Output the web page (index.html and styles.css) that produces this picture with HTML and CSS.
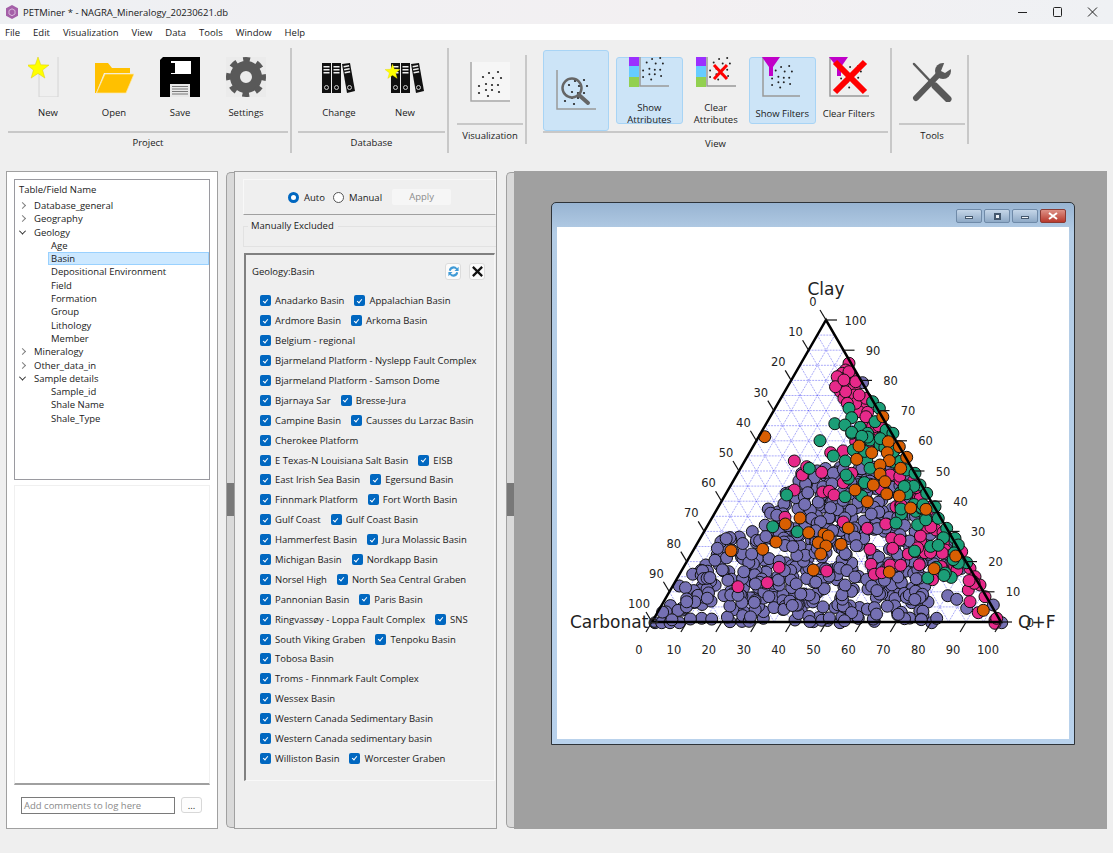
FILE: index.html
```html
<!DOCTYPE html>
<html>

<head>
    <meta charset="utf-8">
    <title>PETMiner * - NAGRA_Mineralogy_20230621.db</title>
    <link rel="stylesheet" href="styles.css">
</head>

<body>
    <svg class="defs" width="0" height="0">
        <defs>
            <symbol id="dots" viewBox="0 0 40 40">
                <g fill="#222">
                    <circle cx="28" cy="10" r="1.100" /><circle cx="19" cy="11" r="1.100" /><circle cx="13" cy="15" r="1.100" />
                    <circle cx="23" cy="16" r="1.100" /><circle cx="31" cy="16" r="1.100" /><circle cx="16" cy="22" r="1.100" />
                    <circle cx="22" cy="23" r="1.100" /><circle cx="28" cy="23" r="1.100" /><circle cx="9" cy="24" r="1.100" />
                    <circle cx="16" cy="28" r="1.100" /><circle cx="22" cy="28" r="1.100" /><circle cx="29" cy="30" r="1.100" />
                    <circle cx="9" cy="31" r="1.100" /><circle cx="18" cy="34" r="1.100" />
                </g>
            </symbol>
            <symbol id="binders" viewBox="0 0 33 30">
                <rect x="0" y="0" width="9" height="30" fill="#111" />
                <rect x="10" y="0" width="9" height="30" fill="#111" />
                <path d="M20 1 28 0 33 28 25 30Z" fill="#111" />
                <path d="M1.5 3h6v1.5h-6zM1.5 6h6v1.5h-6zM1.5 9h6v1.5h-6zM11.500 3h6v1.500h-6zM11.500 6h6v1.500h-6zM11.500 9h6v1.500h-6z" fill="#eee" />
                <path d="M21.500 3 27 2 27.300 3.500 21.800 4.500ZM22 6 27.500 5 27.800 6.500 22.300 7.500ZM22.500 9 28 8 28.300 9.500 22.800 10.500Z" fill="#eee" />
                <circle cx="4.500" cy="24.500" r="2" fill="none" stroke="#ccc" />
                <circle cx="14.500" cy="24.500" r="2" fill="none" stroke="#ccc" />
                <circle cx="27.500" cy="24.500" r="2" fill="none" stroke="#ccc" />
            </symbol>
            <symbol id="star" viewBox="0 0 24 24">
                <path d="M12 0 15 8.500 24 8.800 17 14.200 19.500 23 12 18 4.500 23 7 14.200 0 8.800 9 8.500Z" fill="#ffff00" stroke="#d8c800" stroke-width=".5" />
            </symbol>
        </defs>
    </svg>

    <div class="titlebar">
        <div class="title-left">
            <svg class="app-icon" viewBox="0 0 14 14" width="14" height="14">
                <path d="M7 0 13 3.300V10.700L7 14 1 10.700V3.300Z" fill="#a45fa8" />
                <path d="M4 5.500 7 3.800 10 5.500V9L7 10.700 4 9Z" fill="none" stroke="#d9b8dc" />
            </svg>
            <span>PETMiner * - NAGRA_Mineralogy_20230621.db</span>
        </div>
        <div class="win-controls">
            <svg class="win-btn" viewBox="0 0 35 24"><path d="M13 12.500h9" stroke="#222" /></svg>
            <svg class="win-btn" viewBox="0 0 35 24"><rect x="13.500" y="7.500" width="8" height="9" rx="1" fill="none" stroke="#222" /></svg>
            <svg class="win-btn" viewBox="0 0 35 24"><path d="M13 7.500l9 9M22 7.500l-9 9" stroke="#222" /></svg>
        </div>
    </div>

    <div class="menubar">
        <span>File</span><span>Edit</span><span>Visualization</span><span>View</span><span>Data</span><span>Tools</span><span>Window</span><span>Help</span>
    </div>

    <div class="toolbar">
        <div class="tool-group project">
            <div class="tool-items">
                <div class="tool">
                    <svg class="icon" viewBox="0 0 40 40">
                        <path d="M11 40H30V0" fill="none" stroke="#d4d4d4" />
                        <path d="M11 40V10" fill="none" stroke="#d4d4d4" />
                        <use href="#star" x="-1" y="0" width="22" height="22" />
                    </svg>
                    <span class="tool-label">New</span>
                </div>
                <div class="tool">
                    <svg class="icon" viewBox="0 0 40 40">
                        <path d="M1 36V6H14L18 11H36V16H10L2 36Z" fill="#ffc000" />
                        <path d="M11 17H40L32 36H2.500Z" fill="#ffc000" stroke="#ffe9a8" stroke-width=".7" />
                    </svg>
                    <span class="tool-label">Open</span>
                </div>
                <div class="tool">
                    <svg class="icon" viewBox="0 0 40 40">
                        <path d="M0 3 3 0H40V40H0Z" fill="#000" />
                        <rect x="11" y="4" width="20" height="13" fill="#fff" />
                        <rect x="11" y="6" width="4" height="10" fill="#000" />
                        <rect x="10" y="27" width="20" height="13" fill="#e8e8e8" />
                        <path d="M12 29.500h16M12 32h16M12 34.500h16M12 37h16" stroke="#777" />
                    </svg>
                    <span class="tool-label">Save</span>
                </div>
                <div class="tool">
                    <svg class="icon" viewBox="0 0 40 40">
                        <rect width="40" height="40" fill="#ebebeb" />
                        <circle cx="20" cy="20" r="11" fill="none" stroke="#595959" stroke-width="10" />
                        <circle cx="20" cy="20" r="17" fill="none" stroke="#595959" stroke-width="6" stroke-dasharray="6.700 6.650" stroke-dashoffset="3.300" />
                    </svg>
                    <span class="tool-label">Settings</span>
                </div>
            </div>
            <div class="tool-title">Project</div>
        </div>

        <div class="tool-group database">
            <div class="tool-items">
                <div class="tool">
                    <svg class="icon" viewBox="0 0 40 40"><use href="#binders" x="3" y="6" width="33" height="30" /></svg>
                    <span class="tool-label">Change</span>
                </div>
                <div class="tool">
                    <svg class="icon" viewBox="0 0 40 40">
                        <use href="#binders" x="6" y="6" width="33" height="30" />
                        <use href="#star" x="0" y="6" width="15" height="17" />
                    </svg>
                    <span class="tool-label">New</span>
                </div>
            </div>
            <div class="tool-title">Database</div>
        </div>

        <div class="tool-group short visualization">
            <div class="tool-items">
                <div class="tool">
                    <svg class="icon" viewBox="0 0 40 40">
                        <rect width="40" height="40" fill="#f6f6f6" />
                        <path d="M1 0V39H40" fill="none" stroke="#a6a6a6" stroke-width="1.500" />
                        <use href="#dots" width="40" height="40" />
                    </svg>
                </div>
            </div>
            <div class="tool-title">Visualization</div>
        </div>

        <div class="tool-group view">
            <div class="tool-items">
                <div class="tool tall active">
                    <svg class="icon" viewBox="0 0 40 40">
                        <path d="M1 0V39H40" fill="none" stroke="#999" stroke-width="1.500" />
                        <use href="#dots" width="40" height="40" />
                        <circle cx="16" cy="18" r="9.500" fill="none" stroke="#666" stroke-width="2.500" />
                        <path d="M23 25 32 33" stroke="#666" stroke-width="4" stroke-linecap="round" />
                    </svg>
                </div>
                <div class="tool small on">
                    <svg class="icon-flat" viewBox="0 0 40 30">
                        <rect width="10" height="9" fill="#9b30ff" />
                        <rect y="9" width="10" height="11" fill="#66ccff" />
                        <rect y="20" width="10" height="10" fill="#92d050" />
                        <path d="M11 0V29H40" fill="none" stroke="#999" stroke-width="1.500" />
                        <use href="#dots" x="6" y="-8" width="36" height="36" />
                    </svg>
                    <span class="tool-label two">Show<br>Attributes</span>
                </div>
                <div class="tool small">
                    <svg class="icon-flat" viewBox="0 0 40 30">
                        <rect width="10" height="9" fill="#9b30ff" />
                        <rect y="9" width="10" height="11" fill="#66ccff" />
                        <rect y="20" width="10" height="10" fill="#92d050" />
                        <path d="M11 0V29H40" fill="none" stroke="#999" stroke-width="1.500" />
                        <use href="#dots" x="6" y="-8" width="36" height="36" />
                        <path d="M18 8 31 22M31 8 18 22" stroke="#f00" stroke-width="3" />
                    </svg>
                    <span class="tool-label two">Clear<br>Attributes</span>
                </div>
                <div class="tool small on">
                    <svg class="icon" viewBox="0 0 40 40">
                        <path d="M1 0V39H38" fill="none" stroke="#999" stroke-width="1.500" />
                        <use href="#dots" x="2" width="36" height="36" />
                        <path d="M0 0H18L11 10V19H7V10Z" fill="#c000c8" />
                    </svg>
                    <span class="tool-label one">Show Filters</span>
                </div>
                <div class="tool small">
                    <svg class="icon" viewBox="0 0 40 40">
                        <path d="M1 0V39H40" fill="none" stroke="#999" stroke-width="1.500" />
                        <use href="#dots" x="4" width="36" height="36" />
                        <path d="M0 0H19L12 10V19H8V10Z" fill="#c000c8" />
                        <path d="M6 5 36 35M36 5 6 35" stroke="#f00" stroke-width="6" />
                    </svg>
                    <span class="tool-label one">Clear Filters</span>
                </div>
            </div>
            <div class="tool-title">View</div>
        </div>

        <div class="tool-group short tools">
            <div class="tool-items">
                <div class="tool">
                    <svg class="icon" viewBox="0 0 40 40">
                        <path d="M2 2 20 21" stroke="#595959" stroke-width="2.500" stroke-linecap="round" />
                        <path d="M23 24 36 37" stroke="#595959" stroke-width="7" stroke-linecap="round" />
                        <path d="M4 36 28 11" stroke="#595959" stroke-width="6" stroke-linecap="round" />
                        <circle cx="31" cy="9" r="8" fill="#595959" />
                        <path d="M29 9 33 -1 42 5 33 11Z" fill="#efefef" />
                    </svg>
                </div>
            </div>
            <div class="tool-title">Tools</div>
        </div>
    </div>

    <div class="main">
        <div class="panel left-panel">
            <div class="tree">
                <div class="tree-head">Table/Field Name</div>
                <div class="row parent"><span class="arrow closed"></span>Database_general</div>
                <div class="row parent"><span class="arrow closed"></span>Geography</div>
                <div class="row parent"><span class="arrow open"></span>Geology</div>
                <div class="row child">Age</div>
                <div class="row child selected">Basin</div>
                <div class="row child">Depositional Environment</div>
                <div class="row child">Field</div>
                <div class="row child">Formation</div>
                <div class="row child">Group</div>
                <div class="row child">Lithology</div>
                <div class="row child">Member</div>
                <div class="row parent"><span class="arrow closed"></span>Mineralogy</div>
                <div class="row parent"><span class="arrow closed"></span>Other_data_in</div>
                <div class="row parent"><span class="arrow open"></span>Sample details</div>
                <div class="row child">Sample_id</div>
                <div class="row child">Shale Name</div>
                <div class="row child">Shale_Type</div>
            </div>
            <div class="log"></div>
            <div class="comment-row">
                <div class="comment-input">Add comments to log here</div>
                <div class="comment-btn">...</div>
            </div>
        </div>

        <div class="splitter"><div class="handle"></div></div>

        <div class="panel mid-panel">
            <div class="mode-box">
                <span class="radio checked"></span><span class="mode-label">Auto</span>
                <span class="radio"></span><span class="mode-label">Manual</span>
                <span class="apply">Apply</span>
            </div>
            <div class="excluded"><span class="legend">Manually Excluded</span></div>
            <div class="filter-box">
                <div class="filter-head">
                    <span class="filter-name">Geology:Basin</span>
                    <span class="small-btn">
                        <svg viewBox="0 0 14 14" width="13" height="13">
                            <path d="M2 6A5 5 0 0 1 11 3.500L12.500 2V6.500H8L9.800 4.800A3.500 3.500 0 0 0 4 6.500Z" fill="#3f9ad6" />
                            <path d="M12 8A5 5 0 0 1 3 10.500L1.500 12V7.500H6L4.200 9.200A3.500 3.500 0 0 0 10 7.500Z" fill="#3f9ad6" />
                        </svg>
                    </span>
                    <span class="small-btn">
                        <svg viewBox="0 0 14 14" width="13" height="13"><path d="M2 2 12 12M12 2 2 12" stroke="#111" stroke-width="2.400" /></svg>
                    </span>
                </div>
                <div class="filter-row"><span class="check"></span>Anadarko Basin<span class="check"></span>Appalachian Basin</div>
                <div class="filter-row"><span class="check"></span>Ardmore Basin<span class="check"></span>Arkoma Basin</div>
                <div class="filter-row"><span class="check"></span>Belgium - regional</div>
                <div class="filter-row"><span class="check"></span>Bjarmeland Platform - Nyslepp Fault Complex</div>
                <div class="filter-row"><span class="check"></span>Bjarmeland Platform - Samson Dome</div>
                <div class="filter-row"><span class="check"></span>Bjarnaya Sar<span class="check"></span>Bresse-Jura</div>
                <div class="filter-row"><span class="check"></span>Campine Basin<span class="check"></span>Causses du Larzac Basin</div>
                <div class="filter-row"><span class="check"></span>Cherokee Platform</div>
                <div class="filter-row"><span class="check"></span>E Texas-N Louisiana Salt Basin<span class="check"></span>EISB</div>
                <div class="filter-row"><span class="check"></span>East Irish Sea Basin<span class="check"></span>Egersund Basin</div>
                <div class="filter-row"><span class="check"></span>Finnmark Platform<span class="check"></span>Fort Worth Basin</div>
                <div class="filter-row"><span class="check"></span>Gulf Coast<span class="check"></span>Gulf Coast Basin</div>
                <div class="filter-row"><span class="check"></span>Hammerfest Basin<span class="check"></span>Jura Molassic Basin</div>
                <div class="filter-row"><span class="check"></span>Michigan Basin<span class="check"></span>Nordkapp Basin</div>
                <div class="filter-row"><span class="check"></span>Norsel High<span class="check"></span>North Sea Central Graben</div>
                <div class="filter-row"><span class="check"></span>Pannonian Basin<span class="check"></span>Paris Basin</div>
                <div class="filter-row"><span class="check"></span>Ringvassøy - Loppa Fault Complex<span class="check"></span>SNS</div>
                <div class="filter-row"><span class="check"></span>South Viking Graben<span class="check"></span>Tenpoku Basin</div>
                <div class="filter-row"><span class="check"></span>Tobosa Basin</div>
                <div class="filter-row"><span class="check"></span>Troms - Finnmark Fault Complex</div>
                <div class="filter-row"><span class="check"></span>Wessex Basin</div>
                <div class="filter-row"><span class="check"></span>Western Canada Sedimentary Basin</div>
                <div class="filter-row"><span class="check"></span>Western Canada sedimentary basin</div>
                <div class="filter-row"><span class="check"></span>Williston Basin<span class="check"></span>Worcester Graben</div>
            </div>
        </div>

        <div class="splitter second"><div class="handle"></div></div>

        <div class="workspace">
            <div class="subwindow">
                <div class="sub-title">
                    <span class="sub-btn"><i class="bar"></i></span>
                    <span class="sub-btn"><i class="box"></i></span>
                    <span class="sub-btn"><i class="bar"></i></span>
                    <span class="sub-btn close">
                        <svg viewBox="0 0 10 8" width="10" height="8"><path d="M1 1 9 7M9 1 1 7" stroke="#fff" stroke-width="2" /></svg>
                    </span>
                </div>
                <div class="sub-body">
                    <svg id="chart" class="chart" viewBox="557 227 512 512"></svg>
                </div>
            </div>
        </div>
    </div>

    <script src="script.js"></script>
</body>

</html>
```

FILE: styles.css
```css
html {
    font-family: "Open Sans", "Noto Sans", sans-serif;
    font-size: 9.5px;
    color: #1a1a1a;
}

body {
    margin: 0;
    width: 1113px;
    height: 853px;
    overflow: hidden;
    background-color: #efefef;
}

.defs {
    position: absolute;
}

.titlebar {
    height: 24px;
    display: flex;
    justify-content: space-between;
    align-items: center;
    background: linear-gradient(90deg, #eef0f3, #f3f0f2 60%, #eff1f4);
}

.title-left {
    display: flex;
    align-items: center;
    gap: 4px;
    padding-left: 5px;
}

.win-controls {
    display: flex;
    padding-right: 3px;
}

.win-btn {
    width: 35px;
    height: 24px;
}

.menubar {
    height: 16px;
    display: flex;
    align-items: center;
    gap: 13px;
    padding-left: 5px;
    background-color: #fff;
}

.toolbar {
    height: 130px;
    padding-left: 8px;
    display: flex;
    align-items: flex-start;
}

.tool-group {
    margin-top: 8px;
    height: 105px;
    padding-right: 2px;
    border-right: 2px solid #c8c8c8;
    box-sizing: border-box;
}

.tool-group.short {
    margin-top: 15px;
    height: 89px;
}

.tool-items {
    height: 83px;
    display: flex;
    padding: 0 7px;
}

.short .tool-items {
    height: 68px;
}

.tool-title {
    border-top: 2px solid #c8c8c8;
    text-align: center;
    padding-top: 2px;
    line-height: 15px;
}

.short .tool-title {
    padding-top: 3px;
}

.view .tool-title {
    padding-top: 3px;
}

.project {
    width: 284px;
}

.database {
    width: 151px;
    margin-left: 6px;
}

.database .tool-items {
    padding: 0 8px;
}

.visualization {
    width: 70px;
    margin-left: 8px;
}

.visualization .tool-items,
.tools .tool-items {
    padding: 0;
    justify-content: center;
}

.view {
    width: 349px;
    margin-left: 16px;
}

.view .tool-items {
    padding: 0;
}

.tools {
    width: 70px;
    margin-left: 7px;
}

.tool {
    width: 66px;
    flex-shrink: 0;
    display: flex;
    flex-direction: column;
    align-items: center;
    box-sizing: border-box;
}

.icon {
    width: 40px;
    height: 40px;
    margin-top: 9px;
    flex-shrink: 0;
}

.short .icon {
    margin-top: 7px;
}

.icon-flat {
    width: 40px;
    height: 30px;
    flex-shrink: 0;
}

.tool-label {
    margin-top: 9px;
    line-height: 14px;
    text-align: center;
}

.tool-label.two {
    margin-top: 15px;
    line-height: 11.500px;
}

.tool-label.one {
    margin-top: 10px;
}

.tool.small {
    height: 67px;
    margin-top: 9px;
    width: 66.500px;
    border: 1px solid transparent;
    border-radius: 3px;
}

.tool.small .icon {
    margin-top: -1px;
}

.tool.small .icon-flat {
    margin-top: -1px;
}

.tool.tall {
    margin-top: 2px;
    height: 81px;
    margin-right: 7px;
    border: 1px solid #a8d4f5;
    border-radius: 3px;
    background-color: #cce4f7;
}

.tool.tall .icon {
    margin-top: 19px;
}

.tool.on {
    border-color: #a8d4f5;
    background-color: #cce4f7;
}

.main {
    display: flex;
    height: 659px;
    padding-left: 6px;
    margin-top: 1px;
}

.panel {
    box-sizing: border-box;
    border: 1px solid #a0a0a0;
}

.left-panel {
    width: 212px;
    height: 658px;
    padding: 7px;
    background-color: #fff;
}

.tree {
    width: 196px;
    height: 301px;
    box-sizing: border-box;
    border: 1px solid #9a9aa0;
    position: relative;
}

.tree-head {
    height: 19px;
    line-height: 19px;
    padding-left: 4px;
}

.row {
    height: 13.300px;
    line-height: 13.300px;
    white-space: nowrap;
}

.row.parent {
    padding-left: 19px;
    display: flex;
    align-items: center;
}

.row.child {
    margin-left: 33px;
    padding-left: 3px;
}

.row.selected {
    background-color: #cce8ff;
    box-shadow: inset 0 0 0 1px #99d1ff;
}

.arrow {
    width: 5px;
    height: 5px;
    margin-left: -14px;
    margin-right: 9px;
    box-sizing: border-box;
    flex-shrink: 0;
}

.arrow.closed {
    border-top: 1px solid #808080;
    border-right: 1px solid #808080;
    transform: rotate(45deg);
}

.arrow.open {
    border-bottom: 1px solid #222;
    border-right: 1px solid #222;
    transform: rotate(45deg) translate(-1px, -1px);
}

.log {
    margin-top: 5px;
    height: 300px;
    box-sizing: border-box;
    border: 1px solid #f0f0f0;
    border-bottom: 2px solid #a0a0a0;
}

.comment-row {
    display: flex;
    gap: 6px;
    margin: 12px 0 0 7px;
}

.comment-input {
    width: 154px;
    height: 17px;
    box-sizing: border-box;
    border: 1px solid #7a7a7a;
    line-height: 15px;
    padding-left: 2px;
    color: #8a8a8a;
    white-space: nowrap;
}

.comment-btn {
    width: 21px;
    height: 16px;
    box-sizing: border-box;
    border: 1px solid #d8d8d8;
    border-radius: 3px;
    text-align: center;
    line-height: 15px;
    background-color: #fdfdfd;
}

.splitter {
    width: 8px;
    height: 656px;
    margin: 1px 0 0 8px;
    box-sizing: border-box;
    border: 1px solid #a0a0a0;
    border-right: none;
    border-radius: 5px 0 0 5px;
    background-color: #d9d9d9;
    flex-shrink: 0;
}

.splitter.second {
    margin-left: 9px;
}

.handle {
    height: 33px;
    margin-top: 310px;
    background-color: #787878;
}

.mid-panel {
    width: 263px;
    height: 658px;
    padding: 7px 0 0 8px;
    background-color: #efefef;
}

.mode-box {
    width: 253px;
    height: 36px;
    box-sizing: border-box;
    display: flex;
    align-items: center;
    justify-content: center;
    border: 1px solid #f8f8f8;
    border-bottom: 1px solid #a0a0a0;
}

.radio {
    width: 11px;
    height: 11px;
    box-sizing: border-box;
    border: 1px solid #555;
    border-radius: 50%;
    background-color: #fff;
    margin-right: 5px;
}

.radio.checked {
    border: 3px solid #0067c0;
    background-color: #fff;
}

.mode-label {
    margin-right: 8px;
}

.apply {
    width: 59px;
    height: 16px;
    margin-left: 2px;
    line-height: 16px;
    text-align: center;
    color: #8c8c8c;
    background-color: #f6f6f6;
    border-radius: 2px;
}

.excluded {
    width: 253px;
    height: 21px;
    margin-top: 11px;
    box-sizing: border-box;
    border: 1px solid #e2e2e2;
    border-right: none;
    position: relative;
}

.legend {
    position: absolute;
    top: -8px;
    left: 4px;
    padding: 0 4px 0 3px;
    line-height: 14px;
    background-color: #efefef;
}

.filter-box {
    width: 251px;
    height: 528px;
    margin: 6px 0 0 1px;
    box-sizing: border-box;
    border: 1px solid #f8f8f8;
    border-top: 2px solid #808080;
    border-left: 2px solid #808080;
}

.filter-head {
    height: 36px;
    display: flex;
    align-items: center;
    padding: 0 9px 3px 6px;
    box-sizing: border-box;
}

.filter-name {
    flex: 1;
}

.small-btn {
    width: 16px;
    height: 17px;
    margin-left: 8px;
    display: flex;
    align-items: center;
    justify-content: center;
    border: 1px solid #dcdcdc;
    border-radius: 3px;
    background-color: #fbfbfb;
    box-sizing: border-box;
}

.filter-row {
    height: 19.900px;
    display: flex;
    align-items: center;
    padding-left: 14px;
    white-space: nowrap;
}

.check {
    width: 11px;
    height: 11px;
    margin-right: 4px;
    border-radius: 2px;
    background-color: #0067c0;
    position: relative;
    flex-shrink: 0;
}

.check::after {
    content: "";
    position: absolute;
    left: 3.500px;
    top: 2.500px;
    width: 3px;
    height: 5px;
    box-sizing: border-box;
    border-right: 1px solid #fff;
    border-bottom: 1px solid #fff;
    transform: rotate(40deg);
}

.check:not(:first-child) {
    margin-left: 10px;
}

.workspace {
    width: 593px;
    height: 658px;
    padding: 31px 0 0 37px;
    box-sizing: border-box;
    background-color: #a0a0a0;
}

.subwindow {
    width: 524px;
    height: 543px;
    box-sizing: border-box;
    border: 1px solid #2e3338;
    border-radius: 5px 5px 0 0;
    padding: 0 5px 5px;
    display: flex;
    flex-direction: column;
    background: linear-gradient(180deg, #98b4d2 0, #b4cde6 30px, #b9d2ec 100%);
}

.sub-title {
    height: 24px;
    flex-shrink: 0;
    display: flex;
    justify-content: flex-end;
    align-items: flex-start;
    gap: 2px;
    padding: 6px 3px 0 0;
    box-sizing: border-box;
}

.sub-btn {
    width: 26px;
    height: 14px;
    box-sizing: border-box;
    display: flex;
    align-items: center;
    justify-content: center;
    border: 1px solid #6f8aa8;
    border-radius: 2px;
    background: linear-gradient(180deg, #c5d6e8, #8ea9c6);
}

.sub-btn .bar {
    width: 8px;
    height: 3px;
    margin-top: 2px;
    background-color: #eef2f6;
    border: 1px solid #44586e;
    box-sizing: border-box;
}

.sub-btn .box {
    width: 7px;
    height: 7px;
    background-color: #eef2f6;
    border: 2px solid #44586e;
    box-sizing: border-box;
}

.sub-btn.close {
    border-color: #8a3a33;
    background: linear-gradient(180deg, #dd9186, #b8392c);
}

.sub-body {
    flex: 1;
    background-color: #fff;
}

.chart {
    display: block;
    width: 512px;
    height: 512px;
}

.chart text {
    font-family: "DejaVu Sans", sans-serif;
    fill: #222;
}

.tick-label {
    font-size: 11.500px;
    text-anchor: middle;
    dominant-baseline: central;
}

.axis-label {
    font-size: 17px;
    fill: #111;
}
```

FILE: script.js
```js
// ternary plot, drawn in page coordinates
var A = [652, 622], B = [1001, 622], C = [826, 320];
var NS = 'http://www.w3.org/2000/svg';
var chart = document.getElementById('chart');

function add(name, attrs, text) {
    var el = document.createElementNS(NS, name);
    for (var k in attrs) el.setAttribute(k, attrs[k]);
    if (text !== undefined) el.textContent = text;
    chart.appendChild(el);
    return el;
}

function mix(p, q, t) {
    return [p[0] + (q[0] - p[0]) * t, p[1] + (q[1] - p[1]) * t];
}

function line(p, q, attrs) {
    attrs.x1 = p[0]; attrs.y1 = p[1]; attrs.x2 = q[0]; attrs.y2 = q[1];
    add('line', attrs);
}

// grid every 5 percent
for (var i = 1; i < 20; i++) {
    var t = i / 20;
    var g = { stroke: '#0000ee', 'stroke-width': 0.8, 'stroke-opacity': 0.42, 'stroke-dasharray': '2 1' };
    line(mix(C, A, t), mix(C, B, t), Object.assign({}, g));
    line(mix(A, B, t), mix(A, C, t), Object.assign({}, g));
    line(mix(B, A, t), mix(B, C, t), Object.assign({}, g));
}

// points are listed as crop coordinates of the lower part of the plot
function low(list) {
    return list.map(function (p) { return [560 + p[0] / 3, 430 + p[1] / 3]; });
}
function high(list) {
    return list.map(function (p) { return [550 + p[0] / 2.96, 195 + p[1] / 3]; });
}

var seed = 12345;
function rnd() {
    seed = (seed * 1103515245 + 12345) % 2147483648;
    return seed / 2147483648;
}

var leftEdge = [[110, 800], [130, 720], [230, 650], [280, 590], [330, 480], [400, 430], [470, 350], [578, 285]];
function leftBound(y) {
    for (var i = 1; i < leftEdge.length; i++) {
        if (y <= leftEdge[i][0]) {
            var a = leftEdge[i - 1], b = leftEdge[i];
            return a[1] + (b[1] - a[1]) * (y - a[0]) / (b[0] - a[0]);
        }
    }
    return 285;
}

var purple = [[625, 237], [488, 332], [437, 405], [358, 468], [1163, 497], [1190, 508], [285, 578], [305, 578],
    [330, 578], [358, 578], [425, 565], [510, 575], [610, 565], [705, 570], [760, 575], [840, 578], [880, 560],
    [1115, 578], [1130, 565], [1325, 578], [1300, 525], [1220, 535], [1090, 518], [1055, 518]];
var count = 0;
while (count < 600) {
    var x = 285 + rnd() * 1040;
    var y = 110 + rnd() * 466;
    if (x < leftBound(y)) continue;
    if (x > 1323 - (576 - y) * 0.579 - 12) continue;
    if (y > 425 && x > 1105) continue;
    if (y > 545 && rnd() < 0.6) continue;
    if (Math.hypot(x - 950, y - 335) < 36) continue;
    if (Math.hypot(x - 820, y - 500) < 14) continue;
    if (Math.hypot(x - 905, y - 375) < 18) continue;
    purple.push([x, y]);
    count++;
}

var pink = low([[703, 93], [812, 68], [727, 135], [740, 110], [785, 127], [703, 180], [788, 186], [808, 184],
    [822, 195], [850, 158], [875, 130], [1008, 230], [1022, 225], [675, 262], [850, 276], [922, 295], [977, 282],
    [1128, 300], [995, 325], [1020, 330], [1082, 335], [930, 358], [998, 355], [1045, 372], [1065, 365], [1095, 368],
    [1150, 340], [1155, 360], [933, 403], [990, 405], [1022, 406], [1078, 404], [943, 433], [965, 428], [800, 423],
    [657, 412], [622, 458], [534, 470], [1137, 425], [1184, 408], [1205, 365], [1230, 415], [1225, 480], [1245, 440],
    [1260, 465], [1230, 515], [1255, 548], [1305, 570], [1305, 580], [1310, 565], [1275, 500], [1020, 150], [990, 135],
    [960, 20], [1000, 60], [1060, 190], [1075, 205], [1085, 235]]).concat(high([[885, 505], [875, 525], [865, 535],
    [860, 550], [890, 545], [880, 565], [900, 578], [855, 570], [860, 590], [900, 600], [870, 610], [925, 630],
    [915, 650], [940, 652], [945, 680], [970, 710], [905, 625], [935, 610], [875, 590], [885, 530], [850, 545],
    [905, 560], [845, 575], [870, 555], [915, 600], [880, 625], [935, 665], [955, 695]]));

var green = low([[780, 32], [820, 78], [748, 115], [856, 93], [680, 195], [855, 200], [865, 145], [858, 135],
    [712, 305], [638, 290], [905, 198], [1024, 252], [1095, 258], [1042, 168], [875, 10], [905, 30], [930, 30], [960, 45],
    [985, 10], [900, 65], [920, 90], [930, 115], [880, 60], [1010, 100], [1040, 120], [1065, 130], [1080, 165],
    [1100, 190], [1125, 230], [1135, 265], [1160, 295], [1185, 325], [1195, 345], [1220, 398]]).concat(high([[885, 640],
    [893, 668], [843, 686], [873, 690], [918, 697], [893, 712], [955, 620], [975, 640], [962, 680], [995, 705],
    [1015, 715], [940, 715]]));

// the band along the right side holds more pink and green than can be listed
for (var j = 0; j < 70; j++) {
    var py = 425 + rnd() * 160;
    var px = 1001 - (622 - py) * 0.579 - 4 - rnd() * rnd() * 65;
    if (j % 2) pink.push([px, py]);
    else green.push([px - 2, py]);
}

var orange = low([[614, 20], [897, 48], [985, 35], [1018, 50], [935, 68], [982, 68], [1040, 82], [890, 88], [988, 92],
    [960, 105], [1022, 115], [960, 132], [940, 165], [975, 155], [885, 180], [980, 192], [1018, 198], [922, 215],
    [1052, 234], [1098, 238], [720, 264], [676, 282], [865, 294], [746, 308], [792, 312], [805, 318], [648, 336],
    [775, 338], [798, 348], [843, 343], [513, 362], [608, 358], [782, 372], [1187, 378], [760, 420], [988, 426],
    [1122, 416], [1270, 541]]).concat(high([[985, 665]]));

function dots(list, fill) {
    list.forEach(function (p) {
        add('circle', { cx: p[0].toFixed(1), cy: p[1].toFixed(1), r: 6, fill: fill, stroke: '#111', 'stroke-width': 1 });
    });
}

dots(low(purple).concat(high([[925, 563]])), '#7570b3');
dots(pink, '#e7298a');
dots(green, '#1b9e77');
dots(orange, '#d95f02');

add('polygon', { points: [A, B, C].join(' '), fill: 'none', stroke: '#000', 'stroke-width': 2.5 });

// ticks and numbers on the three sides
for (var n = 0; n <= 10; n++) {
    var s = n / 10;
    var tick = { stroke: '#111', 'stroke-width': 1.2 };
    var pl = mix(C, A, s);
    line(pl, [pl[0] - 6, pl[1] - 10], Object.assign({}, tick));
    add('text', { class: 'tick-label', x: pl[0] - 13, y: pl[1] - 18 }, n * 10);

    var pr = mix(C, B, s);
    line(pr, [pr[0] + 11, pr[1]], Object.assign({}, tick));
    add('text', { class: 'tick-label', x: pr[0] + 29.5, y: pr[1] + 0.5 }, 100 - n * 10);

    var pb = mix(A, B, s);
    line(pb, [pb[0] - 6, pb[1] + 10], Object.assign({}, tick));
    add('text', { class: 'tick-label', x: pb[0] - 13, y: pb[1] + 28 }, n * 10);
}

add('text', { class: 'axis-label', x: 826, y: 295, 'text-anchor': 'middle' }, 'Clay');
add('text', { class: 'axis-label', x: 570, y: 628 }, 'Carbonate');
add('text', { class: 'axis-label', x: 1018, y: 628 }, 'Q+F');
```
